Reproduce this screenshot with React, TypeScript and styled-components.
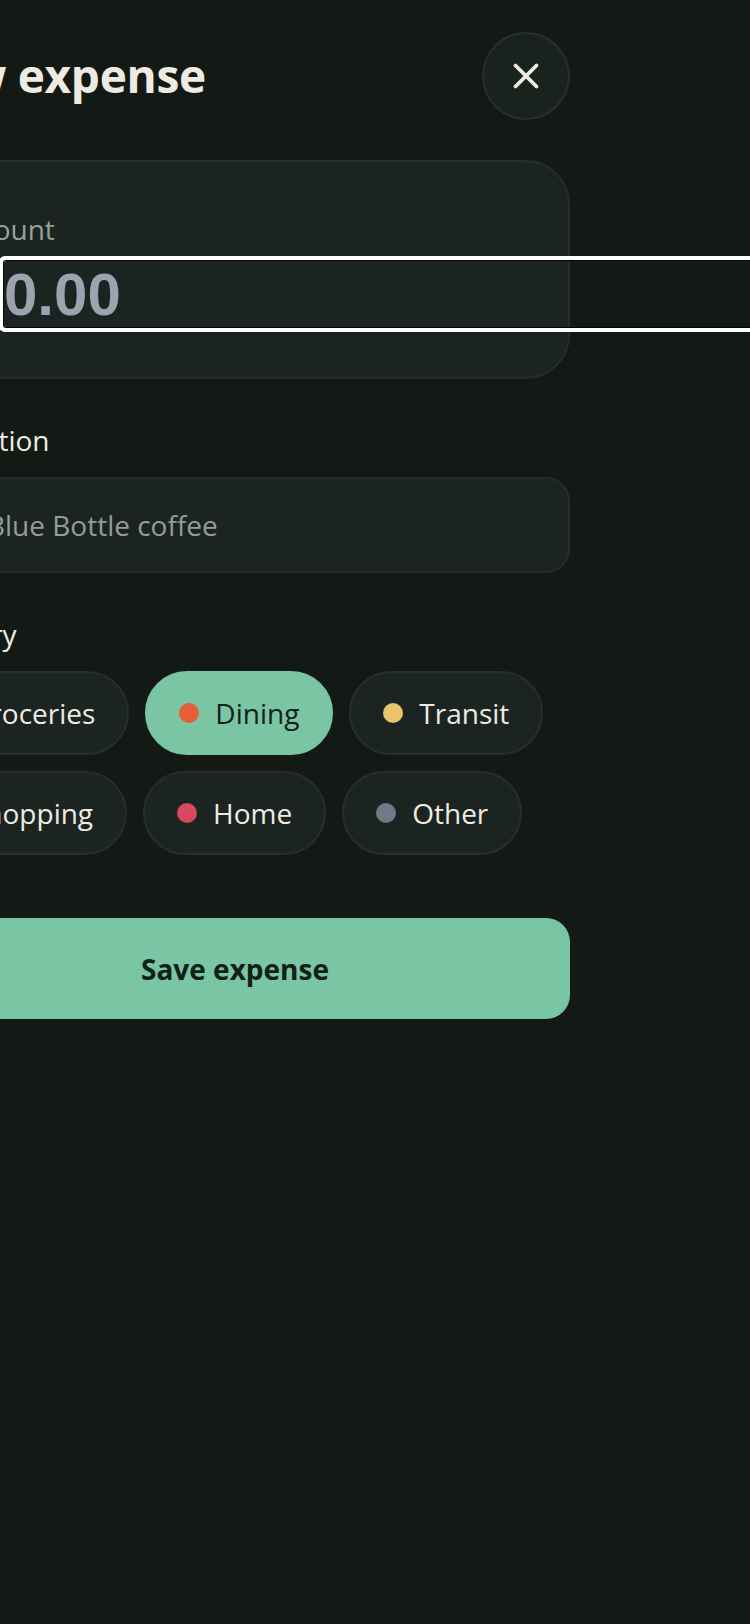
import React, { useState } from "react";
import styled, { createGlobalStyle } from "styled-components";
import { X } from "lucide-react";

const GlobalStyle = createGlobalStyle`
  html, body {
    margin: 0;
    padding: 0;
    background: #131a16;
    overflow: hidden;
  }
  body {
    font-family: "Open Sans", "Noto Sans", sans-serif;
    color: #efebe3;
  }
  * { box-sizing: border-box; }
`;

const Page = styled.main`
  min-height: 1624px;
  width: 750px;
  padding-top: 32px;
  background: #131a16;
`;

/* The sheet is shown horizontally scrolled, as in the reference capture */
const Sheet = styled.div`
  width: 670px;
  margin-left: -100px;
  display: flex;
  flex-direction: column;
`;

const Header = styled.header`
  height: 88px;
  display: flex;
  align-items: center;
  justify-content: space-between;
`;

const Title = styled.h1`
  margin: 0;
  padding-left: 3px;
  font-size: 46px;
  font-weight: 700;
  letter-spacing: -0.3px;
  line-height: 1.2;
  color: #efebe3;
`;

const CloseButton = styled.button`
  width: 88px;
  height: 88px;
  border-radius: 50%;
  background: #1a221e;
  border: 2px solid #27302b;
  color: #efebe3;
  display: flex;
  align-items: center;
  justify-content: center;
  padding: 0;
  cursor: pointer;
`;

const Form = styled.form`
  margin-top: 40px;
  display: flex;
  flex-direction: column;
  gap: 40px;
`;

const AmountCard = styled.section`
  background: #1b2420;
  border: 2px solid #252e29;
  border-radius: 44px;
  padding: 46px 48px 50px;
  display: flex;
  flex-direction: column;
  gap: 11px;
`;

const Label = styled.label<{ $muted?: boolean }>`
  font-size: 28px;
  line-height: 42px;
  color: ${(p) => (p.$muted ? "#97a09a" : "#efebe3")};
`;

const AmountRow = styled.div`
  height: 66px;
  display: flex;
  align-items: center;
  gap: 12px;
`;

const Currency = styled.span`
  width: 42px;
  flex: none;
  font-size: 60px;
  font-weight: 700;
  color: #9ca3af;
  font-family: "Liberation Sans", Arial, sans-serif;
`;

const AmountInput = styled.input`
  flex: none;
  width: 800px;
  height: 66px;
  padding: 0;
  margin: 0;
  border: none;
  border-radius: 2px;
  background: transparent;
  font-family: "Liberation Sans", Arial, sans-serif;
  font-size: 60px;
  font-weight: 700;
  color: #efebe3;
  outline: none;
  box-shadow: 0 0 0 1px #050505, 0 0 0 5px #ffffff;
  &::placeholder {
    color: #9ca3af;
    opacity: 1;
  }
`;

const Field = styled.section`
  display: flex;
  flex-direction: column;
  gap: 16px;
`;

const TextInput = styled.input`
  height: 96px;
  width: 100%;
  padding: 0 32px;
  background: #1b2420;
  border: 2px solid #252e29;
  border-radius: 24px;
  font-family: "Open Sans", sans-serif;
  font-size: 28px;
  color: #efebe3;
  outline: none;
  &::placeholder {
    color: #939c98;
    opacity: 1;
  }
`;

const ChipGrid = styled.div`
  display: flex;
  flex-wrap: wrap;
  gap: 16px;
`;

const Chip = styled.button<{ $active?: boolean }>`
  height: 84px;
  padding: 0 32px;
  display: inline-flex;
  align-items: center;
  gap: 16px;
  border-radius: 999px;
  border: 2px solid ${(p) => (p.$active ? "#79c5a4" : "#262f2a")};
  background: ${(p) => (p.$active ? "#79c5a4" : "#1b2420")};
  color: ${(p) => (p.$active ? "#12201a" : "#efebe3")};
  font-family: "Open Sans", sans-serif;
  font-size: 28px;
  cursor: pointer;
`;

const Dot = styled.span<{ $color: string }>`
  width: 20px;
  height: 20px;
  border-radius: 50%;
  flex: none;
  background: ${(p) => p.$color};
`;

const SaveButton = styled.button`
  margin-top: 63px;
  height: 101px;
  width: 100%;
  border: none;
  border-radius: 24px;
  background: #79c5a4;
  color: #11201a;
  font-family: "Open Sans", sans-serif;
  font-size: 28px;
  font-weight: 700;
  cursor: pointer;
`;

const categories = [
  { name: "Groceries", color: "#5fb98a" },
  { name: "Dining", color: "#e85d35" },
  { name: "Transit", color: "#e9c46a" },
  { name: "Shopping", color: "#9b7fd6" },
  { name: "Home", color: "#d9485f" },
  { name: "Other", color: "#737886" },
];

export default function App() {
  const [active, setActive] = useState("Dining");
  return (
    <>
      <GlobalStyle />
      <Page>
        <Sheet>
          <Header>
            <Title>New expense</Title>
            <CloseButton type="button" aria-label="Close">
              <X size={42} strokeWidth={2.2} />
            </CloseButton>
          </Header>
          <Form onSubmit={(e) => e.preventDefault()}>
            <AmountCard>
              <Label $muted htmlFor="amount">Amount</Label>
              <AmountRow>
                <Currency>$</Currency>
                <AmountInput id="amount" inputMode="decimal" placeholder="0.00" />
              </AmountRow>
            </AmountCard>
            <Field>
              <Label htmlFor="desc">Description</Label>
              <TextInput id="desc" placeholder="e.g. Blue Bottle coffee" />
            </Field>
            <Field>
              <Label>Category</Label>
              <ChipGrid>
                {categories.map((c) => (
                  <Chip
                    key={c.name}
                    type="button"
                    $active={active === c.name}
                    onClick={() => setActive(c.name)}
                  >
                    <Dot $color={c.color} />
                    {c.name}
                  </Chip>
                ))}
              </ChipGrid>
            </Field>
          </Form>
          <SaveButton type="button">Save expense</SaveButton>
        </Sheet>
      </Page>
    </>
  );
}
